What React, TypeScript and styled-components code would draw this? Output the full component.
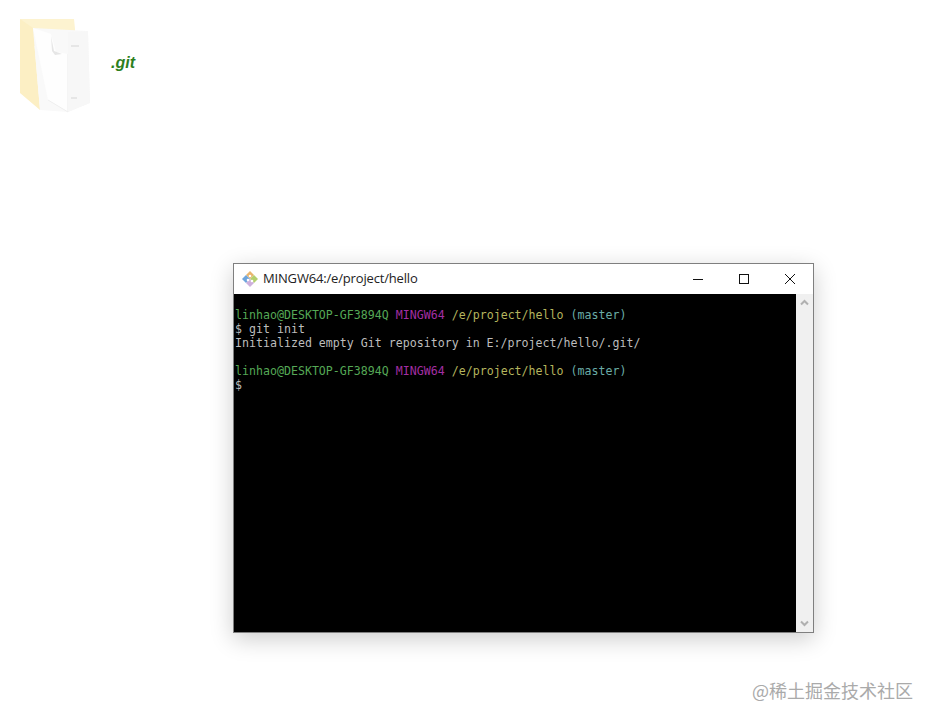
import React from "react";
import styled, { createGlobalStyle } from "styled-components";

const Global = createGlobalStyle`
  html, body { margin: 0; padding: 0; background: #fff; }
  body { width: 933px; height: 721px; overflow: hidden; }
`;

const Page = styled.div`
  width: 933px;
  height: 721px;
  display: flex;
  flex-direction: column;
  box-sizing: border-box;
  background: #fff;
`;

const FolderRow = styled.div`
  display: flex;
  align-items: flex-start;
  height: 263px;
  padding: 16px 0 0 17px;
  box-sizing: border-box;
`;

const FolderGraphic = styled.svg`
  flex: none;
  filter: blur(0.6px);
`;

const FolderName = styled.span`
  margin: 37px 0 0 18px;
  font: italic bold 16px/20px "Liberation Sans", Arial, sans-serif;
  color: #2c7f1d;
`;

const Terminal = styled.div`
  width: 581px;
  height: 370px;
  margin-left: 233px;
  box-sizing: border-box;
  border: 1px solid #7f7f7f;
  display: flex;
  flex-direction: column;
  background: #fff;
  box-shadow: 0 6px 22px rgba(0, 0, 0, 0.2);
`;

const TitleBar = styled.div`
  height: 30px;
  flex: none;
  display: flex;
  align-items: center;
  padding-left: 7px;
  background: #fff;
`;

const TitleText = styled.span`
  margin: -2px 0 0 4px;
  font: 13px/30px "Open Sans", "Noto Sans", sans-serif;
  color: #222;
  letter-spacing: -0.17px;
`;

const WindowButtons = styled.div`
  margin-left: auto;
  display: flex;
`;

const WindowButton = styled.div`
  width: 46px;
  height: 30px;
  display: flex;
  align-items: center;
  justify-content: center;
  margin-top: -1px;
`;

const Body = styled.div`
  flex: 1;
  display: flex;
  min-height: 0;
`;

const Screen = styled.pre`
  flex: 1;
  margin: 0;
  padding: 14px 0 0 1px;
  background: #000;
  color: #bdbdbd;
  font: 11.62px/14px "DejaVu Sans Mono", "Liberation Mono", monospace;
  overflow: hidden;
`;

const Seg = styled.span<{ $c: string }>`
  color: ${(p) => p.$c};
`;

const Scrollbar = styled.div`
  width: 17px;
  flex: none;
  background: #f0f0f0;
  display: flex;
  flex-direction: column;
  justify-content: space-between;
  align-items: center;
  padding: 5px 0;
  box-sizing: border-box;
`;

const Watermark = styled.div`
  margin-top: auto;
  padding: 0 20px 19px 0;
  text-align: right;
  font: 18px/24px "Noto Sans CJK SC", sans-serif;
  color: #aaa;
`;

const Prompt = () => (
  <>
    <Seg $c="#55a856">linhao@DESKTOP-GF3894Q</Seg> <Seg $c="#a32ea3">MINGW64</Seg>{" "}
    <Seg $c="#b5b55e">/e/project/hello</Seg> <Seg $c="#6aaca6">(master)</Seg>
  </>
);

const FolderIcon = () => (
  <FolderGraphic width="76" height="98" viewBox="0 0 76 98">
    <path d="M3 3 H57 L58 13 L58 30 L16 30 Z" fill="#fdf3d0" />
    <path d="M3 3 L16 12 L23 94 L3 77 Z" fill="#fcefc4" />
    <path d="M16 12 L71 15 L73 87 L51 96 L23 94 Z" fill="#f9f9f9" />
    <path d="M16 12 L34 18 L39 36 L51 38 L51 96 L31 84 Z" fill="#fefefe" />
    <path d="M34 20 L37 35 L45 38 L38 39 L35 35 Z" fill="#e6e6e6" />
    <path d="M51 38 V96" stroke="#ececec" strokeWidth="1" />
    <path d="M31 84 L51 96" stroke="#efefef" strokeWidth="1" />
    <path d="M51 16 L71 15 L73 87 L51 96 Z" fill="#f7f7f7" />
    <path d="M54 30 h8 M54 82 h6" stroke="#e6e6e6" strokeWidth="2" />
  </FolderGraphic>
);

const GitLogo = () => (
  <svg width="18" height="18" viewBox="0 0 18 18">
    <path d="M9 1 L13 5 L9 9 L5 5 Z" fill="#e9b56e" />
    <path d="M1 9 L5 5 L9 9 L5 13 Z" fill="#6ea5dc" />
    <path d="M13 5 L17 9 L13 13 L9 9 Z" fill="#b3d06e" />
    <path d="M5 13 L9 9 L13 13 L9 17 Z" fill="#cdb0dc" />
    <circle cx="9" cy="6" r="1.3" fill="#fff" />
    <circle cx="7" cy="10" r="1.3" fill="#fff" />
    <circle cx="11" cy="11" r="1.3" fill="#fff" />
  </svg>
);

const Chevron = ({ up }: { up?: boolean }) => (
  <svg width="9" height="7" viewBox="0 0 9 7">
    <path d={up ? "M1 5.5 L4.5 2 L8 5.5" : "M1 1.5 L4.5 5 L8 1.5"} fill="none" stroke="#b0b0b0" strokeWidth="2" />
  </svg>
);

export default function App() {
  return (
    <Page>
      <Global />
      <FolderRow>
        <FolderIcon />
        <FolderName>.git</FolderName>
      </FolderRow>
      <Terminal>
        <TitleBar>
          <GitLogo />
          <TitleText>MINGW64:/e/project/hello</TitleText>
          <WindowButtons>
            <WindowButton>
              <svg width="10" height="10" viewBox="0 0 10 10">
                <path d="M0 5.5 H10" stroke="#111" strokeWidth="1" />
              </svg>
            </WindowButton>
            <WindowButton>
              <svg width="10" height="10" viewBox="0 0 10 10">
                <rect x="0.5" y="0.5" width="9" height="9" fill="none" stroke="#111" strokeWidth="1" />
              </svg>
            </WindowButton>
            <WindowButton>
              <svg width="10" height="10" viewBox="0 0 10 10">
                <path d="M0 0 L10 10 M10 0 L0 10" stroke="#111" strokeWidth="1" />
              </svg>
            </WindowButton>
          </WindowButtons>
        </TitleBar>
        <Body>
          <Screen>
            <Prompt />
            {"\n$ git init\nInitialized empty Git repository in E:/project/hello/.git/\n\n"}
            <Prompt />
            {"\n$"}
          </Screen>
          <Scrollbar>
            <Chevron up />
            <Chevron />
          </Scrollbar>
        </Body>
      </Terminal>
      <Watermark>@稀土掘金技术社区</Watermark>
    </Page>
  );
}
